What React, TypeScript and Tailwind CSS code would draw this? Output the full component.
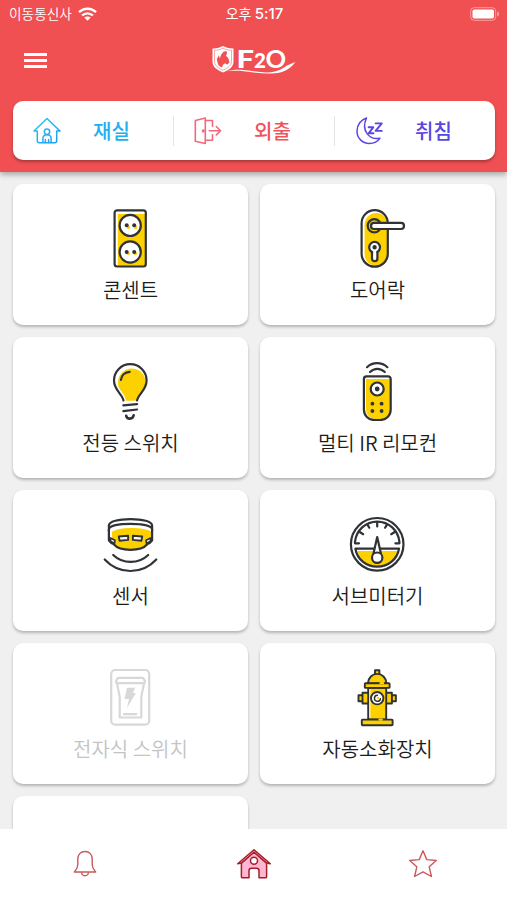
import type { ReactNode } from "react";
import clsx from "clsx";

const DARK = "#2f3236";
const YELLOW = "#fdd000";

type IconProps = { children: ReactNode; color?: string };

const DeviceIcon = ({ children, color = DARK }: IconProps) => (
	<svg
		className="mr-[2px]"
		width="60"
		height="60"
		viewBox="0 0 60 60"
		fill="none"
		stroke={color}
		strokeWidth="2.2"
		strokeLinecap="round"
		strokeLinejoin="round"
	>
		{children}
	</svg>
);

const OutletIcon = () => (
	<DeviceIcon>
		<rect x="17.8" y="6" width="27.5" height="52" fill={YELLOW} stroke="none" />
		<rect x="14.6" y="2.3" width="31.2" height="56.2" rx="2.5" />
		<circle cx="30.2" cy="17.4" r="10.6" fill="#fff" />
		<circle cx="30.2" cy="44" r="10.6" fill="#fff" />
		<g fill={YELLOW} stroke="none">
			<circle cx="28.4" cy="19.4" r="1.7" />
			<circle cx="35.6" cy="19.4" r="1.7" />
			<circle cx="28.2" cy="45.4" r="1.7" />
			<circle cx="35.4" cy="45.4" r="1.7" />
		</g>
		<g fill={DARK} stroke="none">
			<circle cx="26.7" cy="17.3" r="2" />
			<circle cx="34.2" cy="17.3" r="2" />
			<circle cx="26.7" cy="44" r="2" />
			<circle cx="34.2" cy="44" r="2" />
		</g>
	</DeviceIcon>
);

const DoorLockIcon = () => (
	<DeviceIcon>
		<rect x="17.6" y="5" width="23.5" height="53" rx="11.7" fill={YELLOW} stroke="none" />
		<rect x="14.6" y="2.2" width="26.2" height="56.5" rx="13.1" />
		<circle cx="27.3" cy="17.8" r="6.6" fill={YELLOW} />
		<rect x="24" y="14.9" width="33" height="6.1" rx="3" fill="#fff" />
		<path d="M25 40l0 10.5a2.6 2.6 0 0 0 5.4 0V40" fill="#fff" />
		<circle cx="27.6" cy="39.3" r="5.4" fill="#fff" />
		<path d="M26.2 42h3v4h-3z" fill="#fff" stroke="none" />
		<circle cx="27.6" cy="39.3" r="1.1" fill={DARK} />
	</DeviceIcon>
);

const BulbIcon = () => (
	<DeviceIcon>
		<path
			d="M32 7.5a14 14 0 0 1 13 18c-1.8 5-6.5 7.5-8 14.2H26c-1-6.7-5.5-9-7.5-14.2A14 14 0 0 1 32 7.5z"
			fill={YELLOW}
			stroke="none"
		/>
		<path d="M23.5 39.5C22 32.5 14 29 14 19.500a16.3 16.3 0 0 1 32.6 0c0 9.500-8 13-9.600 20" />
		<path d="M20.900 19c.5-4.500 4-7.700 8.800-8.100" />
		<path d="M23.300 44.300l13.800-1.100M23.300 50.200l13.800-1.700" />
		<path d="M26.200 54.700c.8 4 6.600 4 7.500-.4" strokeWidth="2.600" />
	</DeviceIcon>
);

const RemoteIcon = () => (
	<DeviceIcon>
		<path d="M19 18h25v31a9 9 0 0 1-9 9h-7a9 9 0 0 1-9-9z" fill={YELLOW} stroke="none" />
		<path d="M19.500 15.300h21.600a2.600 2.600 0 0 1 2.600 2.600v30.500c0 6-4.400 10.600-10.400 10.600h-6c-6 0-10.400-4.600-10.400-10.600V17.900a2.600 2.600 0 0 1 2.600-2.600z" />
		<circle cx="30.2" cy="28" r="6.500" fill="#fff" />
		<g fill={DARK} stroke="none">
			<circle cx="30.2" cy="28" r="2.4" />
			<circle cx="25.4" cy="42.7" r="1.9" />
			<circle cx="34.6" cy="42.7" r="1.9" />
			<circle cx="25.4" cy="50" r="1.9" />
			<circle cx="34.6" cy="50" r="1.9" />
		</g>
		<path d="M23 11c4.300-4.300 10.300-4.300 14.800 0" />
		<path d="M20 6.200c5.600-5.400 14.600-5.400 20.400 0" />
	</DeviceIcon>
);

const SensorIcon = () => (
	<DeviceIcon>
		<path
			d="M12 18c6-5 31-5.500 40.500 0v8c-1.500 2-5 2.500-5.500 4.500-3 3-9 5-16.500 5s-13-2-16-4.500c-1-3-2.500-2-2.500-5z"
			fill={YELLOW}
			stroke="none"
		/>
		<path d="M8.900 17v-5.500c0-4.200 10-6.400 21.600-6.400s21.600 2.200 21.600 6.400V17" />
		<path d="M8.900 15.500c0-4 10-5.700 21.600-5.700s21.600 1.700 21.600 5.700" />
		<path d="M8.900 16v10.500c1.200 2 3.500 3.200 5.200 3.700M52.100 16v10.500c-1.200 2-3.500 3.200-5.200 3.700" />
		<path d="M14 30.500c3 3.600 9.500 5.300 16.500 5.300S44 34.100 47 30.500" />
		<path d="M10.500 24l4.400 2.300-.4 3.200-4-2.300zM50.500 24l-4.400 2.300.4 3.200 4-2.300z" fill="#fff" strokeWidth="1.700" />
		<path d="M18.800 22.500l9.300-.8v4.200l-8.500.8zM42.200 22.500l-9.300-.8v4.200l8.500.8z" fill="#fff" strokeWidth="1.900" />
		<path d="M13.200 41c9.500 9.200 25.500 9.200 35 0" />
		<path d="M4.700 45.500c14 15.300 37.600 15.300 51.600 0" />
	</DeviceIcon>
);

const MeterIcon = () => (
	<DeviceIcon>
		<path d="M10.500 37h40.500c-2 9-9 15.500-20 15.500S12.500 46 10.500 37z" fill={YELLOW} stroke="none" />
		<circle cx="30.2" cy="30.3" r="26.300" />
		<path d="M12 29.300H8v-1.500a22.300 22.300 0 0 1 44.400 0v1.500h-4" />
		<path d="M8.400 34.700h43.600C50.300 45.200 41.300 52.600 30.200 52.600S10.100 45.200 8.400 34.700z" />
		<path d="M30.200 8v4.500M20.300 10.400l2 3.300M40.100 10.400l-2 3.300M12.700 18l3.500 2.200M47.700 18l-3.500 2.200" />
		<path d="M26.500 39.500L30.200 23l3.700 16.500" fill="#fff" />
		<circle cx="30.200" cy="43.700" r="5.200" fill="#fff" />
	</DeviceIcon>
);

const SwitchIcon = () => (
	<DeviceIcon color="#d8d8d8">
		<rect x="11.200" y="3" width="38" height="54.700" rx="4" />
		<path d="M18 10.900h25l2 3.200-.5 2h-28l-.5-2z" />
		<path d="M17 16.100l2.700 14V50.500h21.600V30.100l2.700-14" />
		<path d="M23.900 47.200h12.400" />
		<path d="M27 20.800h8.200l-2.300 5.200h3L27 41l2-9h-4.500z" fill="#d8d8d8" stroke="none" />
	</DeviceIcon>
);

const HydrantIcon = () => (
	<DeviceIcon>
		<g fill={YELLOW} strokeWidth="1.900">
			<path d="M28 7V3.200h4.400V7" />
			<path d="M20.800 16.500c.5-5.800 4.500-9.600 9.400-9.600s8.900 3.800 9.400 9.600z" />
			<path d="M15.500 28.200h-4v6h4M44.900 28.200h4v6h-4" />
			<path d="M20.500 25.800h-5v10.700h5M39.900 25.800h5v10.700h-5" />
			<path d="M21.200 20.700h18v31.800h-18z" />
			<rect x="17.800" y="16.200" width="24.800" height="4.700" rx=".7" />
			<rect x="14.800" y="52.600" width="30.800" height="5.700" rx=".7" />
		</g>
		<path d="M33.500 16.200h2.600M32.500 52.600h2.300" stroke={YELLOW} strokeWidth="2.200" />
		<path d="M22.900 22.500v28" stroke="#fff" strokeWidth="1" />
		<circle cx="30.200" cy="31.200" r="6.200" fill="#fff" strokeWidth="1.900" />
		<path d="M30.500 28.300a3 3 0 1 0 2.900 3.500" strokeWidth="1.500" />
		<circle cx="31" cy="31" r="1.200" fill={YELLOW} stroke="none" />
	</DeviceIcon>
);

const HomeModeIcon = () => (
	<svg width="28" height="28" viewBox="0 0 28 28" fill="none" stroke="url(#homeStroke)" strokeWidth="1.500" strokeLinecap="round" strokeLinejoin="round">
		<defs>
			<linearGradient id="homeStroke" x1="0" y1="0" x2="28" y2="28" gradientUnits="userSpaceOnUse">
				<stop stopColor="#26cdf5" />
				<stop offset="1" stopColor="#2196ef" />
			</linearGradient>
		</defs>
		<path d="M1 14L14 1.500 27 14h-3.300v9.800c0 1.300-.7 2-2 2H6.300c-1.300 0-2-.7-2-2V14z" />
		<circle cx="14" cy="14.700" r="2.700" />
		<path d="M9.900 25.500v-3.800c0-5.300 8.200-5.300 8.200 0v3.800M12.400 25.500v-3M15.600 25.500v-3" />
	</svg>
);

const AwayModeIcon = () => (
	<svg width="28" height="28" viewBox="0 0 28 28" fill="none" stroke="#f16a7b" strokeWidth="1.600" strokeLinecap="round" strokeLinejoin="round">
		<path d="M1.300 3.500L11.300 1v25.500l-10-2.200z" />
		<path d="M11.500 3.500h7v5.800M11.500 23.300h7v-5.500" />
		<path d="M15.300 13.700h11.300M22.300 9.500l4.300 4.200-4.300 4.200" />
		<circle cx="9.300" cy="13.900" r=".8" fill="#f16a7b" />
	</svg>
);

const SleepModeIcon = () => (
	<svg width="28" height="28" viewBox="-1 0 28 28" fill="none" stroke="#5b46e3" strokeWidth="1.500" strokeLinecap="round" strokeLinejoin="round">
		<path d="M10.500 1C4.800 3 1 8 1 14.200 1 21 6.400 26.500 13.200 26.500c4.500 0 8.500-1.800 10.800-5.300C14 23.500 4.500 14 10.500 1z" />
		<path d="M12.600 10.300h4.700l-4.700 6h4.900" strokeWidth="1.900" />
		<path d="M19.600 6.400h6.200l-6.200 7.500h6.200" strokeWidth="1.900" />
	</svg>
);

const Logo = () => (
	<svg width="86" height="40" viewBox="0 -5 86 40" fill="none">
		<path d="M1.500 3.500C5 3.600 8.500 2.800 12 1c3.500 1.800 7 2.600 10.500 2.500v13c0 5.500-4.500 8.500-10.500 11C6 25 1.500 22 1.500 16.500z" fill="#fff" />
		<path d="M3.500 5.200c3 0 6-.7 8.500-2 2.500 1.300 5.500 2 8.500 2v11.100c0 4-3 6.300-8.500 8.900-5.500-2.600-8.500-4.900-8.500-8.900z" stroke="#f05052" strokeWidth=".5" />
		<path d="M12.500 6.800l3-.8c.8 1.500.4 3.500-.6 4.700l2.300 2.300 1.300 4-2 2.800-2.300-1.500c-1.800.8-2.700 2-3.200 4.200-2.600-.5-3.800-2.400-4.400-4.700l-.8-3.900 2.200-3.700.8 3.200 1.300-3.600z" fill="#f05052" />
		<text x="25.500" y="23.300" fill="#fff" fontFamily="Lato, sans-serif" fontWeight="900" fontSize="25.500" textLength="17.500" lengthAdjust="spacingAndGlyphs">F</text>
		<text x="43" y="23.300" fill="#fff" fontFamily="Lato, sans-serif" fontWeight="900" fontSize="20.500">2</text>
		<text x="54.500" y="23.300" fill="#fff" fontFamily="Lato, sans-serif" fontWeight="700" fontSize="25.500">O</text>
		<path d="M16 26.200c8-2.500 17-1.500 25-.2 13 2.300 24 2.200 32-3.500 3.500-2.500 7-4 11.500-5.500-4 5-8 8.500-14.500 10.200-9 2.200-19 1.400-29 0-8-1.200-16-2-25-1z" fill="#fff" />
	</svg>
);

const BellIcon = () => (
	<svg className="mb-[2px]" width="24" height="28" viewBox="0 0 24 28" fill="none" stroke="#c8595c" strokeWidth="1.400" strokeLinejoin="round">
		<path d="M12 1.500c-4.600 0-7.200 3.200-7.200 7.500v5.500c0 4-1.600 5.500-3.500 7.500h21.400c-1.900-2-3.500-3.500-3.500-7.500V9c0-4.300-2.600-7.500-7.200-7.500z" />
		<path d="M8.500 22.200c.2 2 1.500 3.500 3.500 3.500s3.300-1.500 3.500-3.500" />
	</svg>
);

const HomeIcon = () => (
	<svg className="mb-[2px]" width="36" height="32" viewBox="0 0 36 32" fill="none" stroke="#a31f28" strokeWidth="1.500" strokeLinecap="round" strokeLinejoin="round">
		<path d="M5.400 15v13.700c0 .8.300 1.100 1.100 1.100H13v-7c0-1.600.9-2.500 2.500-2.500h5c1.600 0 2.500.9 2.500 2.500v7h6.500c.8 0 1.100-.3 1.100-1.100V15L18 3.500z" fill="#ffb6d2" />
		<path d="M1.700 15.700L18 1.700l16.300 14-3.700-.6L18 4.200 5.400 15.100z" fill="#ffb6d2" />
		<circle cx="18" cy="12.700" r="3.500" fill="#fff" />
	</svg>
);

const StarIcon = () => (
	<svg className="mb-[2px]" width="30" height="30" viewBox="0 0 30 30" fill="none" stroke="#c8595c" strokeWidth="1.400" strokeLinejoin="round">
		<path d="M15 1.800l3.800 8.800 9.500.9-7.100 6.300 2.200 9.700-8.400-4.700-8.400 4.700 2.200-9.700-7.100-6.300 9.500-.9z" />
	</svg>
);

const modes = [
	{ label: "재실", icon: <HomeModeIcon />, color: "text-[#21afee]" },
	{ label: "외출", icon: <AwayModeIcon />, color: "text-[#ef5359]" },
	{ label: "취침", icon: <SleepModeIcon />, color: "text-[#5847e1]" },
];

const devices = [
	{ label: "콘센트", icon: <OutletIcon /> },
	{ label: "도어락", icon: <DoorLockIcon /> },
	{ label: "전등 스위치", icon: <BulbIcon /> },
	{ label: "멀티 IR 리모컨", icon: <RemoteIcon /> },
	{ label: "센서", icon: <SensorIcon /> },
	{ label: "서브미터기", icon: <MeterIcon /> },
	{ label: "전자식 스위치", icon: <SwitchIcon />, disabled: true },
	{ label: "자동소화장치", icon: <HydrantIcon /> },
];

const StatusBar = () => (
	<div className="grid grid-cols-3 items-center h-[27px] pl-[9px] pr-[7px] text-white text-sm leading-none">
		<div className="flex items-center gap-[6px] text-[13.7px] font-[350]">
			<span>이동통신사</span>
			<svg width="19" height="14" viewBox="0 0 19 14" fill="none" stroke="#fff" strokeWidth="2.400">
				<path d="M1 5.200c4.800-4.700 12.200-4.700 17 0M4.100 8.500c3-2.900 7.800-2.900 10.800 0" />
				<path d="M6.300 10.600c1.700-1.600 4.700-1.600 6.400 0L9.500 13.800z" fill="#fff" stroke="none" />
			</svg>
		</div>
		<div className="text-center">
			오후 <span className="font-[Inter] font-medium text-[15px]">5:17</span>
		</div>
		<div className="flex justify-end">
			<svg width="30" height="14" viewBox="0 0 30 14">
				<rect x=".7" y=".7" width="25" height="12.600" rx="3.500" fill="none" stroke="#fff" strokeOpacity=".45" />
				<rect x="2.500" y="2.500" width="21.500" height="9" rx="1.800" fill="#fff" />
				<path d="M27.300 4.500c2.400 1 2.400 4 0 5z" fill="#fff" fillOpacity=".5" />
			</svg>
		</div>
	</div>
);

export default function App() {
	return (
		<div className="flex flex-col w-full h-[900px] overflow-hidden bg-[#f0f0f0] font-['Noto_Sans_CJK_KR',sans-serif]">
			{/* Header */}
			<header className="relative z-10 shrink-0 h-[172px] bg-[#f05052] shadow-[0_3px_5px_rgba(0,0,0,0.28)]">
				<StatusBar />

				<div className="grid grid-cols-3 items-center h-[66px] px-6">
					<button className="flex flex-col gap-[3px] w-[23px]">
						<span className="h-[3px] bg-white" />
						<span className="h-[3px] bg-white" />
						<span className="h-[3px] bg-white" />
					</button>
					<div className="flex justify-center">
						<Logo />
					</div>
				</div>

				{/* Mode selector */}
				<div className="flex items-center mt-2 ml-[13px] mr-3 h-[59px] rounded-[10px] bg-white shadow-[0_2px_3px_rgba(0,0,0,0.3)]">
					{modes.map((mode, i) => (
						<button
							key={mode.label}
							className={clsx("flex flex-1 items-center h-[30px] pl-5", i > 0 && "border-l border-[#e4e4e4]")}
						>
							{mode.icon}
							<span className={clsx("ml-8 pt-px text-xl leading-none font-medium", mode.color)}>{mode.label}</span>
						</button>
					))}
				</div>
			</header>

			{/* Devices */}
			<main className="flex-1 min-h-0 overflow-hidden pt-3 pl-[13px] pr-3">
				<div className="grid grid-cols-2 gap-3">
					{devices.map((device) => (
						<button
							key={device.label}
							className="flex flex-col items-center h-[141px] pt-6 rounded-[10px] bg-white shadow-[0_2px_3px_rgba(0,0,0,0.25)]"
						>
							{device.icon}
							<span
								className={clsx(
									"mt-[5px] text-xl leading-[34px] font-[350]",
									device.disabled ? "text-[#c4c4c4]" : "text-[#1c1c1c]"
								)}
							>
								{device.label}
							</span>
						</button>
					))}
					<div className="h-[141px] rounded-[10px] bg-white shadow-[0_2px_3px_rgba(0,0,0,0.25)]" />
				</div>
			</main>

			{/* Bottom navigation */}
			<nav className="grid grid-cols-3 shrink-0 h-[71px] bg-white">
				<button className="flex justify-center items-center">
					<BellIcon />
				</button>
				<button className="flex justify-center items-center">
					<HomeIcon />
				</button>
				<button className="flex justify-center items-center">
					<StarIcon />
				</button>
			</nav>
		</div>
	);
}
